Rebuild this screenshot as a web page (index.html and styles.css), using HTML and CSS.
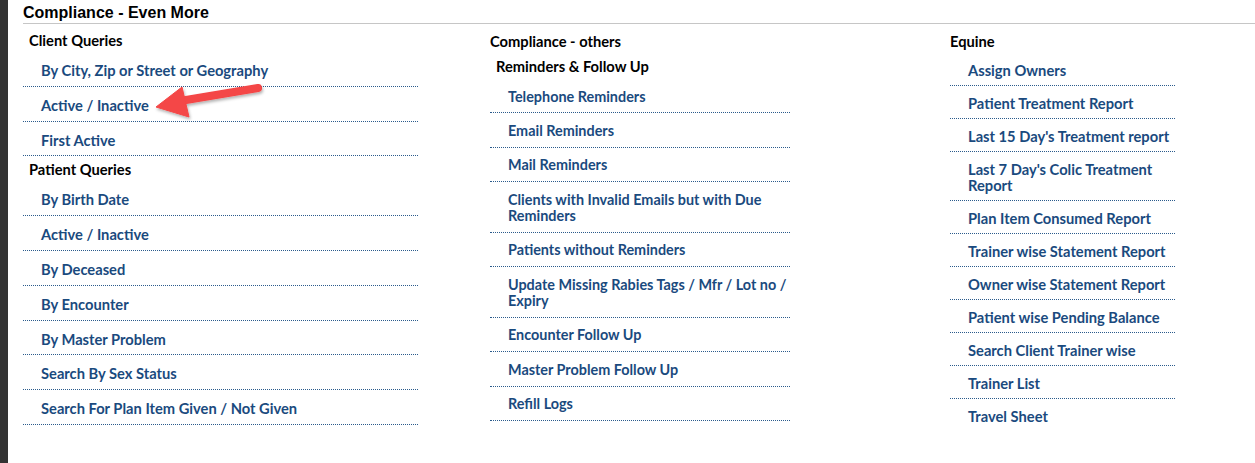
FILE: index.html
```html
<!DOCTYPE html>
<html lang="en">
<head>
<meta charset="utf-8">
<title>Compliance - Even More</title>
<link rel="stylesheet" href="styles.css">
</head>
<body>
<div class="page">
  <div class="rail"></div>
  <main class="content">
    <h1 class="title">Compliance - Even More</h1>
    <div class="cols">
      <section class="col col-1">
        <h2 class="head">Client Queries</h2>
        <ul class="links">
          <li><a href="#">By City, Zip or Street or Geography</a></li>
          <li><a href="#">Active / Inactive</a></li>
          <li><a href="#">First Active</a></li>
        </ul>
        <h2 class="head">Patient Queries</h2>
        <ul class="links">
          <li><a href="#">By Birth Date</a></li>
          <li><a href="#">Active / Inactive</a></li>
          <li><a href="#">By Deceased</a></li>
          <li><a href="#">By Encounter</a></li>
          <li><a href="#">By Master Problem</a></li>
          <li><a href="#">Search By Sex Status</a></li>
          <li><a href="#">Search For Plan Item Given / Not Given</a></li>
        </ul>
      </section>
      <section class="col col-2">
        <h2 class="head">Compliance - others</h2>
        <h3 class="head sub">Reminders &amp; Follow Up</h3>
        <ul class="links">
          <li><a href="#">Telephone Reminders</a></li>
          <li><a href="#">Email Reminders</a></li>
          <li><a href="#">Mail Reminders</a></li>
          <li><a href="#">Clients with Invalid Emails but with Due Reminders</a></li>
          <li><a href="#">Patients without Reminders</a></li>
          <li><a href="#">Update Missing Rabies Tags / Mfr / Lot no / Expiry</a></li>
          <li><a href="#">Encounter Follow Up</a></li>
          <li><a href="#">Master Problem Follow Up</a></li>
          <li><a href="#">Refill Logs</a></li>
        </ul>
      </section>
      <section class="col col-3">
        <h2 class="head">Equine</h2>
        <ul class="links">
          <li><a href="#">Assign Owners</a></li>
          <li><a href="#">Patient Treatment Report</a></li>
          <li><a href="#">Last 15 Day's Treatment report</a></li>
          <li><a href="#">Last 7 Day's Colic Treatment Report</a></li>
          <li><a href="#">Plan Item Consumed Report</a></li>
          <li><a href="#">Trainer wise Statement Report</a></li>
          <li><a href="#">Owner wise Statement Report</a></li>
          <li><a href="#">Patient wise Pending Balance</a></li>
          <li><a href="#">Search Client Trainer wise</a></li>
          <li><a href="#">Trainer List</a></li>
          <li><a href="#">Travel Sheet</a></li>
        </ul>
      </section>
    </div>
  </main>
  <svg class="arrow" width="300" height="130" viewBox="0 0 300 130" aria-hidden="true">
    <defs>
      <filter id="sh" x="-20%" y="-40%" width="140%" height="180%">
        <feDropShadow dx="1" dy="2" stdDeviation="1.5" flood-color="#000" flood-opacity="0.3"/>
      </filter>
    </defs>
    <g filter="url(#sh)" fill="#f44646" stroke="#f44646">
      <line x1="258" y1="88" x2="180" y2="101" stroke-width="8" stroke-linecap="round"/>
      <polygon points="156,107 182,87 189,117" stroke-width="1" stroke-linejoin="round"/>
    </g>
  </svg>
</div>
</body>
</html>
```
FILE: styles.css
```css
html, body {
  margin: 0;
  padding: 0;
  background: #fff;
}

body {
  font-family: Lato, "Open Sans", sans-serif;
}

.page {
  position: relative;
  display: flex;
  min-height: 100vh;
}

.rail {
  flex: none;
  width: 8px;
  background: #333333;
}

.content {
  flex: 1;
  padding-left: 15px;
}

.title {
  margin: 0;
  padding: 4px 0 1px;
  font-family: "Liberation Sans", Arial, sans-serif;
  font-weight: bold;
  font-size: 16px;
  line-height: 18px;
  color: #000;
  border-bottom: 1px solid #c6c6c6;
}

.cols {
  display: grid;
  grid-template-columns: 467px 460px 1fr;
  padding-top: 3px;
}

.head {
  margin: 0;
  font-size: 14.7px;
  font-weight: bold;
  line-height: 18px;
  color: #000;
  padding: 5px 0 2px;
}

.col-1 .head {
  padding: 4px 0 3px 6px;
}

.col-2 .sub {
  padding: 5px 0 4px 6px;
}

.col-3 .head {
  padding: 5px 0 3px;
}

.links {
  list-style: none;
  margin: 0;
  padding: 0;
}

.col-1 .links { width: 395px; }
.col-2 .links { width: 300px; }
.col-3 .links { width: 225px; }

.links li {
  border-bottom: 1px dotted #2b5b8c;
  font-size: 14.7px;
  line-height: 16px;
  padding-left: 18px;
}

.col-1 .links li { padding-top: 10px; padding-bottom: 7.8px; }
.col-2 .links li { padding-top: 9.5px; padding-bottom: 7.94px; font-size: 14.4px; }
.col-3 .links li { padding-top: 8.5px; padding-bottom: 7.5px; }

.col-3 .links li:last-child {
  border-bottom: none;
}

.links a {
  color: #1a4a7e;
  text-decoration: none;
  font-weight: bold;
}

.arrow {
  position: absolute;
  left: 0;
  top: 0;
  pointer-events: none;
}
```
